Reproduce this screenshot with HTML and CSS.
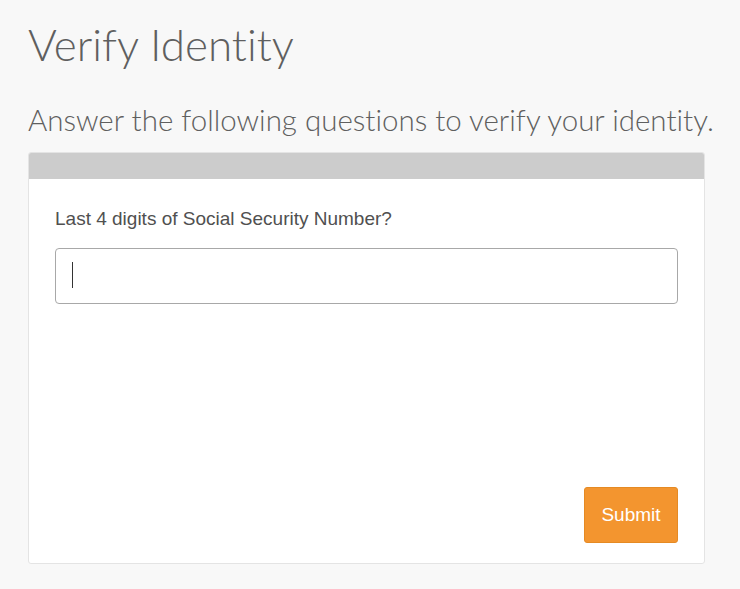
FILE: index.html
```html
<!DOCTYPE html>
<html lang="en">
<head>
<meta charset="utf-8">
<title>Verify Identity</title>
<link rel="stylesheet" href="styles.css">
</head>
<body>
<main class="page">
  <h1 class="title">Verify Identity</h1>
  <p class="subtitle">Answer the following questions to verify your identity.</p>
  <section class="card">
    <div class="card-header"></div>
    <form class="card-body">
      <label class="question" for="ssn">Last 4 digits of Social Security Number?</label>
      <div class="field"><span class="caret"></span><input id="ssn" class="input" type="text"></div>
      <div class="actions">
        <button type="button" class="submit">Submit</button>
      </div>
    </form>
  </section>
</main>
</body>
</html>
```
FILE: styles.css
```css
html, body {
  margin: 0;
  padding: 0;
  background: #f8f8f8;
}
.page {
  padding: 16px 35px 0 28px;
  font-family: Lato, "Open Sans", sans-serif;
  font-variant-ligatures: none;
}
.title {
  margin: 0;
  font-weight: 300;
  font-size: 44px;
  line-height: 56px;
  color: #5f5f5f;
}
.subtitle {
  margin: 30px 0 0 0;
  font-weight: 300;
  font-size: 29.5px;
  line-height: 36px;
  color: #5f5f5f;
  white-space: nowrap;
}
.card {
  margin-top: 14px;
  background: #fff;
  border: 1px solid #e4e4e4;
  border-radius: 3px;
  overflow: hidden;
  height: 412px;
  display: flex;
  flex-direction: column;
  box-sizing: border-box;
}
.card-header {
  height: 26px;
  background: #cccccc;
  flex: none;
}
.card-body {
  flex: 1;
  display: flex;
  flex-direction: column;
  padding: 29px 26px 20px 26px;
  font-family: "Liberation Sans", Arial, sans-serif;
}
.question {
  font-size: 19px;
  line-height: 22px;
  color: #505050;
}
.field {
  position: relative;
  margin-top: 18px;
}
.input {
  display: block;
  width: 100%;
  box-sizing: border-box;
  height: 56px;
  border: 1px solid #a8a8a8;
  border-radius: 4px;
  background: #fff;
  padding: 0 16px;
  font-size: 16px;
  outline: none;
}
.caret {
  position: absolute;
  left: 17px;
  top: 14px;
  width: 1px;
  height: 26px;
  background: #333;
}
.actions {
  margin-top: auto;
  display: flex;
  justify-content: flex-end;
}
.submit {
  width: 94px;
  height: 56px;
  border: 1px solid #e58a24;
  border-radius: 3px;
  background: #f3952f;
  color: #fff;
  font-family: "Liberation Sans", Arial, sans-serif;
  font-size: 19px;
  cursor: pointer;
}
```
